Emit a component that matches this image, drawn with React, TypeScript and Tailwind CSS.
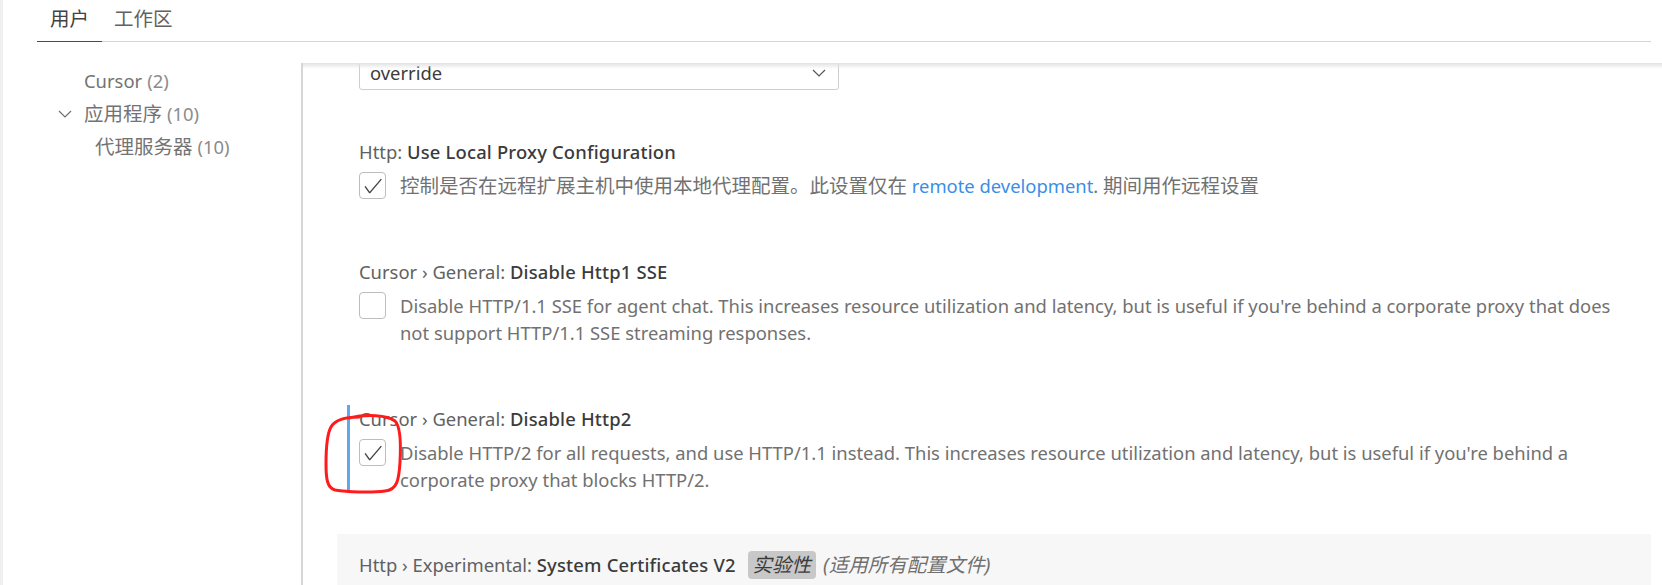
import type { ReactNode } from "react";

function Chevron({ className }: { className?: string }) {
  return (
    <svg width="14" height="8" viewBox="0 0 14 8" fill="none" className={className}>
      <path d="M1 1l6 6 6-6" stroke="currentColor" strokeWidth="1.2" />
    </svg>
  );
}

function Checkbox({ checked }: { checked: boolean }) {
  return (
    <div className="flex h-[27px] w-[27px] shrink-0 items-center justify-center rounded-[4px] border border-[#bdbdbd] bg-white">
      {checked && (
        <svg width="22" height="22" viewBox="0 0 16 16" fill="#444">
          <path d="M14.431 3.323l-8.47 10-.79-.036-3.35-4.77.818-.574 2.978 4.24 8.051-9.506.764.646z" />
        </svg>
      )}
    </div>
  );
}

function Zh({ children }: { children: ReactNode }) {
  return <span className="text-[19.5px]">{children}</span>;
}

function Setting({
  category,
  label,
  checked,
  focused,
  children,
  overlay,
}: {
  category: string;
  label: string;
  checked: boolean;
  focused?: boolean;
  children: ReactNode;
  overlay?: ReactNode;
}) {
  return (
    <div className="relative pt-[18px] pb-[41px]">
      <div
        className={`ml-[10px] border-l-[3px] pl-[9px] ${
          focused ? "border-[#5fa8ec]" : "border-transparent"
        }`}
      >
        <div className="h-[27px] whitespace-nowrap leading-[27px]">
          <span className="text-[#616161]">{category}</span>
          <span className="font-medium tracking-[0.18px] text-[#3b3b3b]">{label}</span>
        </div>
        <div className="mt-[7px] flex gap-[14px]">
          <Checkbox checked={checked} />
          <div className="pr-[26px] leading-[27px] text-[#717171]">{children}</div>
        </div>
      </div>
      {overlay}
    </div>
  );
}

// hand drawn red loop around the checkbox
function RedLoop() {
  return (
    <svg
      width="80"
      height="80"
      viewBox="0 0 80 80"
      fill="none"
      className="pointer-events-none absolute left-[-14px] top-[27px]"
    >
      <path
        d="M26 4C44 0 64 1 72 7C78 13 78 30 77 48C76 66 74 76 62 77C48 79 24 78 12 76C4 74 3 64 3 50C3 34 4 20 8 13C12 6 22 3 36 3"
        stroke="#ff1b1b"
        strokeWidth="3"
        strokeLinecap="round"
      />
    </svg>
  );
}

export default function App() {
  return (
    <div className="flex h-[585px] w-[1662px] overflow-hidden bg-white font-['Noto_Sans','Noto_Sans_CJK_SC',sans-serif] text-[18.4px]">
      <div className="w-[3px] shrink-0 bg-[#f0f0f0]" />
      <div className="flex min-w-0 flex-1 flex-col">
        {/* user / workspace tabs */}
        <div className="ml-[34px] mr-[11px] flex h-[42px] shrink-0 border-b border-[#d4d4d4]">
          <div className="-mb-px flex items-center border-b border-[#4a4a4a] px-[13px] pb-[3px] text-[#424242]">
            <Zh>用户</Zh>
          </div>
          <div className="flex items-center px-[12px] pb-[3px] text-[#616161]">
            <Zh>工作区</Zh>
          </div>
        </div>

        <div className="flex min-h-0 flex-1 pt-[21px]">
          {/* table of contents */}
          <div className="w-[300px] shrink-0 border-r-2 border-[#d6d6d6] pt-px text-[#737373]">
            <div className="flex h-[33px] items-center pl-[81px]">
              Cursor<span className="ml-[5px] text-[#8c8c8c]">(2)</span>
            </div>
            <div className="flex h-[33px] items-center pl-[55px]">
              <Chevron className="mr-[12px] text-[#6f6f6f]" />
              <Zh>应用程序</Zh>
              <span className="ml-[5px] text-[#8c8c8c]">(10)</span>
            </div>
            <div className="flex h-[33px] items-center pl-[92px]">
              <Zh>代理服务器</Zh>
              <span className="ml-[5px] text-[#8c8c8c]">(10)</span>
            </div>
          </div>

          {/* settings list */}
          <div className="relative min-w-0 flex-1 overflow-hidden">
            <div className="pointer-events-none absolute inset-x-0 top-0 z-10 h-[6px] bg-linear-to-b from-[#e2e2e2] to-transparent" />
            <div className="-mt-[7px] pl-[34px] pr-[11px]">
              <div className="pb-[30px] pl-[22px]">
                <div className="flex h-[34px] w-[480px] items-center justify-between rounded-[3px] border border-[#cecece] bg-white pl-[10px] pr-[12px] text-[#3b3b3b]">
                  <span className="leading-[16px]">override</span>
                  <Chevron className="text-[#555]" />
                </div>
              </div>

              <Setting category="Http: " label="Use Local Proxy Configuration" checked>
                <Zh>控制是否在远程扩展主机中使用本地代理配置。此设置仅在</Zh>{" "}
                <span className="text-[#3a8ee6]">remote development</span>.{" "}
                <Zh>期间用作远程设置</Zh>
              </Setting>

              <Setting category="Cursor › General: " label="Disable Http1 SSE" checked={false}>
                Disable HTTP/1.1 SSE for agent chat. This increases resource utilization and
                latency, but is useful if you're behind a corporate proxy that does not support
                HTTP/1.1 SSE streaming responses.
              </Setting>

              <Setting
                category="Cursor › General: "
                label="Disable Http2"
                checked
                focused
                overlay={<RedLoop />}
              >
                Disable HTTP/2 for all requests, and use HTTP/1.1 instead. This increases resource
                utilization and latency, but is useful if you're behind a corporate proxy that
                blocks HTTP/2.
              </Setting>

              <div className="bg-[#f7f7f7] pb-[40px] pt-[17px]">
                <div className="ml-[22px] flex h-[27px] items-center whitespace-nowrap leading-[27px]">
                  <span className="text-[#616161]">Http › Experimental:&nbsp;</span>
                  <span className="font-medium tracking-[0.18px] text-[#3b3b3b]">
                    System Certificates V2
                  </span>
                  <span className="ml-[12px] rounded-[4px] bg-[#c8c8c8] px-[5px] italic leading-[28px] text-[#3b3b3b]">
                    <Zh>实验性</Zh>
                  </span>
                  <span className="ml-[7px] italic text-[#6f6f6f]">
                    <Zh>(适用所有配置文件)</Zh>
                  </span>
                </div>
              </div>
            </div>
          </div>
        </div>
      </div>
    </div>
  );
}
